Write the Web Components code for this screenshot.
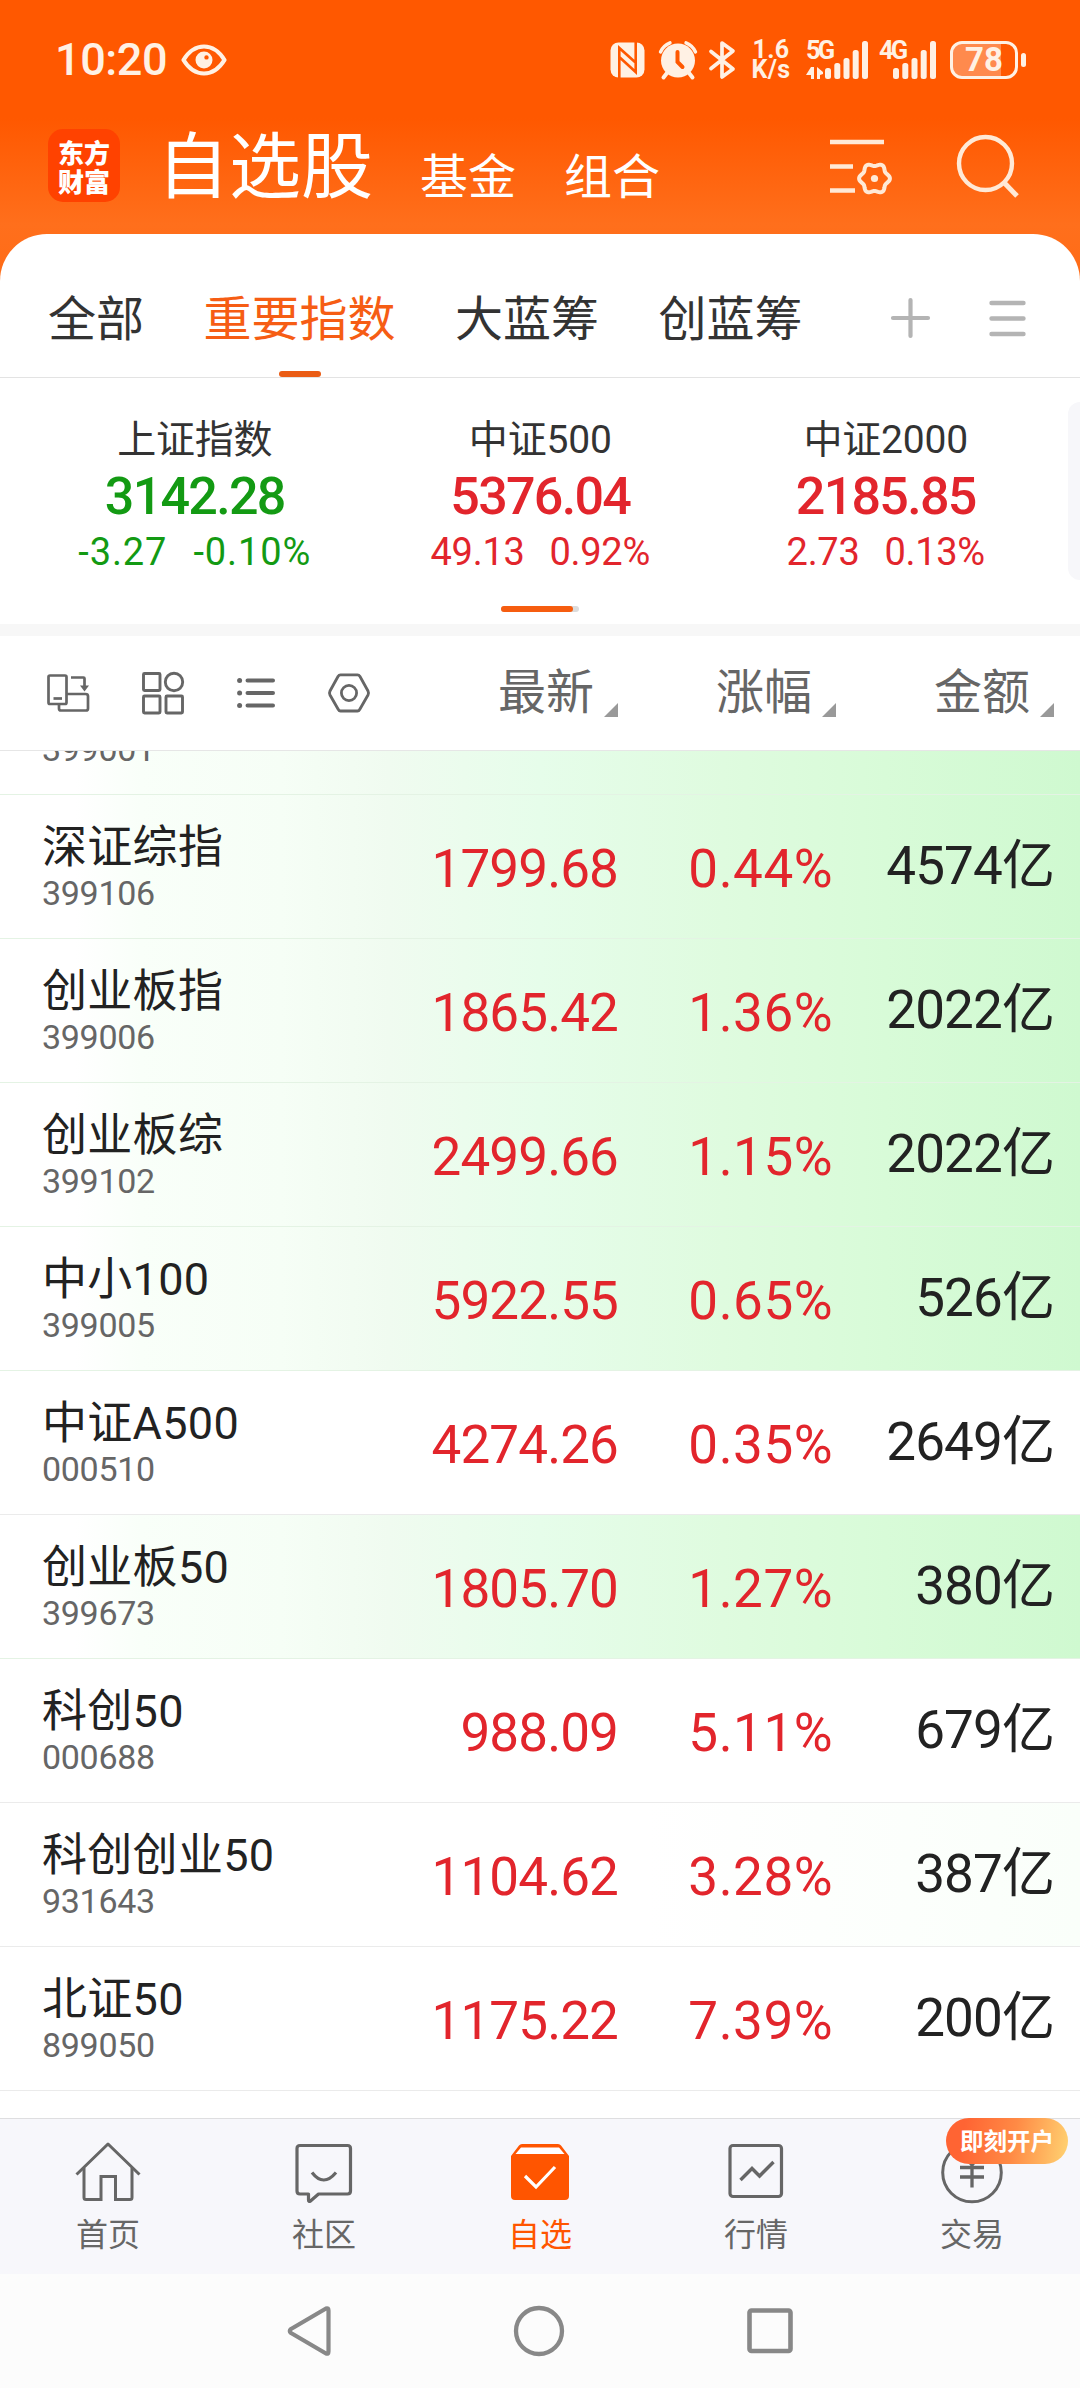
<!DOCTYPE html>
<html lang="zh-CN">
<head>
<meta charset="utf-8">
<meta name="viewport" content="width=device-width, initial-scale=1">
<title>自选股</title>
<style>
  html, body { margin: 0; padding: 0; }
  body {
    width: 1080px; height: 2388px; overflow: hidden;
    font-family: Roboto, "Noto Sans CJK SC", sans-serif;
    color: #222;
    background: #fff;
  }
</style>
</head>
<body>
<stock-app></stock-app>

<script>
const gearPath = (cx, cy, r, a) => {
  const pts = [];
  for (let i = 0; i < 120; i++) {
    const t = i / 120 * Math.PI * 2;
    const rr = r + a * Math.cos(6 * t);
    pts.push((cx + rr * Math.cos(t)).toFixed(2) + ' ' + (cy + rr * Math.sin(t)).toFixed(2));
  }
  return 'M' + pts.join('L') + 'Z';
};

/* name: [width, height, markup] */
const ICONS = {
  eye: [46, 32, `<path d="M2.5 16C8 7 15 2.5 23 2.5S38 7 43.500 16C38 25 31 29.500 23 29.500S8 25 2.500 16Z" fill="none" stroke="currentColor" stroke-width="4.2" stroke-linejoin="round"/><path fill-rule="evenodd" fill="currentColor" d="M23 7.500a8.500 8.500 0 1 0 0 17a8.500 8.500 0 1 0 0-17ZM25.500 11.200a2.200 2.200 0 1 1 0 4.400a2.200 2.200 0 1 1 0-4.400Z"/>`],
  nfc: [35, 36, `<rect x="0.500" y="0.500" width="34" height="35" rx="8" fill="currentColor"/><path d="M9.300 36V6L25.500 20.500M25.700 0V30L9.800 15.500" fill="none" stroke="#ff5800" stroke-width="2.600"/>`],
  alarm: [38, 38, `<circle cx="19" cy="19.500" r="17" fill="currentColor"/><path d="M1.500 11A17 17 0 0 1 11 1.800M36.500 11A17 17 0 0 0 27 1.800" stroke="currentColor" stroke-width="3.400" stroke-linecap="round" fill="none"/><path d="M8 32L4.500 36.500M30 32L33.500 36.500" stroke="currentColor" stroke-width="4" stroke-linecap="round"/><path d="M18.500 11V21L23.500 26" stroke="#ff5800" stroke-width="4" fill="none" stroke-linecap="round"/>`],
  bluetooth: [26, 38, `<path d="M2 10.500L24 28L13 36V2L24 10L2 27.500" stroke="currentColor" stroke-width="3.700" stroke-linejoin="round" stroke-linecap="round" fill="none"/>`],
  bars: [38, 38, `<g fill="currentColor"><rect x="0" y="27" width="6" height="11" rx="2.500"/><rect x="9.300" y="22" width="6" height="16" rx="2.500"/><rect x="18.500" y="17" width="6" height="21" rx="2.500"/><rect x="27.700" y="9" width="6" height="29" rx="2.500"/><rect x="37" y="0" width="6" height="38" rx="2.500"/></g>`],
  transfer: [18, 12, `<path d="M5 0H8V12H5V8H0ZM11 0L17 5V7L14 8V12H11Z" fill="currentColor"/>`],
  filter: [66, 58, `<path d="M1 9H55M1 33.500H24M1 57.500H26" transform="translate(0,-1)" stroke="currentColor" stroke-width="4.600"/><path d="${gearPath(45.5, 44.5, 13.900, 1.500)}" fill="none" stroke="currentColor" stroke-width="4"/><circle cx="45.500" cy="44.500" r="3.600" fill="currentColor"/>`],
  search: [64, 66, `<circle cx="29.500" cy="29.500" r="26.500" fill="none" stroke="currentColor" stroke-width="4.400"/><path d="M48 48.500L61 62" stroke="currentColor" stroke-width="5"/>`],
  plus: [39, 40, `<path d="M2 20H37M19.500 2V38" stroke="currentColor" stroke-width="4.200" stroke-linecap="round"/>`],
  menu: [37, 37, `<path d="M2.500 3H34.500M2.500 18.500H34.500M2.500 34H34.500" stroke="currentColor" stroke-width="4.400" stroke-linecap="round"/>`],
  rotate: [42, 38, `<g fill="none" stroke="currentColor" stroke-width="2.700" stroke-linejoin="round"><rect x="1.500" y="1.500" width="18" height="28.500" rx="1.500"/><path d="M20 20H38.500Q41 20 41 22V34.500Q41 36.500 39 36.500H14Q12 36.500 12 34.500V30.500"/><path d="M6.500 24.500H15"/><path d="M24 3.500H36.500Q37.500 3.500 37.500 4.500V13"/></g><path d="M33 11.500H42L37.500 17.500Z" fill="currentColor"/>`],
  grid: [42, 42, `<g fill="none" stroke="currentColor" stroke-width="2.900"><rect x="1.500" y="1.500" width="16.500" height="17" rx="1"/><circle cx="32" cy="10" r="8.700"/><rect x="1.500" y="24" width="16.500" height="17" rx="1"/><rect x="24" y="24" width="16.500" height="17" rx="1"/></g>`],
  list: [38, 32, `<path d="M10.500 3.500H36M10.500 16H36M10.500 28.500H36" stroke="currentColor" stroke-width="4" stroke-linecap="round"/><g fill="currentColor"><circle cx="2.600" cy="3.500" r="2.500"/><circle cx="2.600" cy="16" r="2.500"/><circle cx="2.600" cy="28.500" r="2.500"/></g>`],
  nut: [42, 40, `<path d="M12.500 1.800H29.500Q31 1.800 32 3.500L40 18Q41 20 40 22L32 36Q31 38 29.500 38H12.500Q11 38 10 36L2 22Q1 20 2 18L10 3.500Q11 1.800 12.500 1.800Z" fill="none" stroke="currentColor" stroke-width="2.800"/><circle cx="21" cy="20" r="7.600" fill="none" stroke="currentColor" stroke-width="2.800"/>`],
  sort: [14, 14, `<path d="M14 0V14H0Z" fill="currentColor"/>`],
  home: [66, 62, `<g fill="none" stroke="currentColor" stroke-width="3"><path d="M1.500 33.500L33 3L64.500 33.500" stroke-linejoin="round"/><path d="M9 27V56.500Q9 58.500 11 58.500H26V35.500H40.500V58.500H55Q57 58.500 57 56.500V27"/></g>`],
  chat: [58, 62, `<path d="M5 4.500H52.500Q55.500 4.500 55.500 7.500V50Q55.500 53 52.500 53H23.500L15.500 60Q13.500 61 13.500 59V53H5Q2 53 2 50V7.500Q2 4.500 5 4.500Z" fill="none" stroke="currentColor" stroke-width="3.200" stroke-linejoin="round"/><path d="M17 31.500Q28.500 46.500 41 31.500" fill="none" stroke="currentColor" stroke-width="3.200"/>`],
  watch: [60, 62, `<path d="M1 15L9 4.500Q10 3 12 3H48Q50 3 51 4.500L59 15V55Q59 59 55 59H5Q1 59 1 55Z" fill="currentColor"/><path d="M5.500 13L11 6.500H49L54.500 13Z" fill="#fff"/><path d="M15 35L26 46L45 26" fill="none" stroke="#fff" stroke-width="3.200"/>`],
  chart: [56, 62, `<rect x="2" y="4.500" width="51.500" height="51" rx="3" fill="none" stroke="currentColor" stroke-width="3.200"/><path d="M12.500 39L24 27.500L31.500 35L45.500 21" fill="none" stroke="currentColor" stroke-width="3.400"/>`],
  trade: [62, 62, `<circle cx="31" cy="31.500" r="29.300" fill="none" stroke="currentColor" stroke-width="3"/><path d="M21 12L31 24L41 12M19 26.500H43M19 36H43M31 24V46.500" fill="none" stroke="currentColor" stroke-width="3.300"/>`],
  back: [44, 52, `<path d="M39 3.500Q41.500 2.500 41.500 5.500V46.500Q41.500 49.500 39 48.500L4 28Q1.500 26 4 24Z" fill="none" stroke="currentColor" stroke-width="4.200" stroke-linejoin="round"/>`],
  circle: [52, 52, `<circle cx="26" cy="26" r="23" fill="none" stroke="currentColor" stroke-width="4.300"/>`],
  square: [46, 46, `<rect x="2.500" y="2.500" width="41" height="40.500" rx="2" fill="none" stroke="currentColor" stroke-width="4.600"/>`]
};

const define = (name, template) => {
  customElements.define(name, class extends HTMLElement {
    constructor() { super(); this.attachShadow({ mode: 'open' }); }
    connectedCallback() {
      this.shadowRoot.innerHTML = typeof template === 'function' ? template(this) : template;
    }
  });
};

define('ui-icon', el => {
  const [w, h, body] = ICONS[el.getAttribute('name')];
  return `<style>:host{display:block;flex:none;width:${w}px;height:${h}px}svg{display:block;overflow:visible}</style>
  <svg width="${w}" height="${h}" viewBox="0 0 ${w} ${h}">${body}</svg>`;
});

define('battery-level', `
<style>
  :host{display:flex;align-items:center;gap:3px;flex:none}
  .body{box-sizing:border-box;width:68px;height:38px;border:3.500px solid #fff1e4;border-radius:12px;padding:0;display:flex;align-items:center;justify-content:center;
    background:linear-gradient(90deg,#ff8a4d 0 78%,transparent 78%);font-size:33px;line-height:30px;font-weight:700;color:#fff1e4}
  .tip{width:5px;height:14px;border-radius:3px;background:#fff1e4}
</style>
<div class="body"><slot></slot></div><div class="tip"></div>`);

define('signal-meter', el => `
<style>
  :host{display:grid;flex:none;width:${el.getAttribute('w')}px;height:38px;grid-template-columns:${el.getAttribute('lead')}px 1fr;font-weight:700;font-size:25.500px;line-height:19px;letter-spacing:-3px}
  ui-icon{grid-row:1;grid-column:2}
  .l{grid-row:1;grid-column:1;display:flex;flex-direction:column;justify-content:space-between;white-space:nowrap}
</style>
<div class="l"><slot></slot>${el.hasAttribute('data') ? '<ui-icon name="transfer"></ui-icon>' : ''}</div>
<ui-icon name="bars"></ui-icon>`);

define('status-bar', `
<style>
  :host{display:flex;align-items:center;height:120px;padding:0 54px 0 55px;box-sizing:border-box;color:#fff1e4}
  .time{font-size:45px;line-height:54px;font-weight:500;letter-spacing:-.4px;width:126px;white-space:nowrap}
  .right{margin-left:auto;display:flex;align-items:center}
  .speed{font-size:25px;line-height:20.500px;font-weight:700;text-align:center;width:40px;margin:0 15px 0 16px;white-space:nowrap;letter-spacing:.4px}
  .speed div{height:20.500px}
</style>
<div class="time">10:20</div><ui-icon name="eye"></ui-icon>
<div class="right">
  <ui-icon name="nfc"></ui-icon>
  <ui-icon name="alarm" style="margin-left:14px"></ui-icon>
  <ui-icon name="bluetooth" style="margin-left:12px"></ui-icon>
  <div class="speed"><div>1.6</div><div>K/s</div></div>
  <signal-meter w="73" lead="19" data>5G</signal-meter>
  <signal-meter w="71" lead="14">4G</signal-meter>
  <battery-level>78</battery-level>
</div>`);

define('brand-logo', `
<style>
  :host{display:grid;box-sizing:border-box;width:72px;height:73px;border-radius:15px;background:#ff4200;color:#fff;align-content:center;justify-content:center;
  font:900 26px/29px "Noto Sans CJK SC",sans-serif;text-align:center;flex:none}
</style>
<div>东方</div><div>财富</div>`);

define('app-header', `
<style>
  :host{display:flex;align-items:flex-start;height:114px;padding:0 60px 0 48px;box-sizing:border-box;color:#fff}
  brand-logo{margin-top:9px}
  h1,span{margin:0;font-weight:400;white-space:nowrap}
  h1{font-size:72px;line-height:96px;margin-left:37px}
  span{font-size:48px;line-height:60px;margin-top:28px}
  .a{margin-left:47px}.b{margin-left:48px}
  .icons{margin-left:auto;display:flex;color:#ffe9d6}
</style>
<brand-logo></brand-logo>
<h1>自选股</h1><span class="a">基金</span><span class="b">组合</span>
<div class="icons"><ui-icon name="filter" style="margin-top:14px"></ui-icon><ui-icon name="search" style="margin:14px 0 0 61px"></ui-icon></div>`);

define('group-tab', `
<style>
  :host{display:flex;flex-direction:column;align-items:center;justify-content:flex-end;height:143px;font-size:48px;line-height:60px;color:#333;white-space:nowrap}
  i{display:block;width:42px;height:6px;border-radius:3px;margin-top:21px}
  :host([active]){color:#f65d14}
  :host([active]) i{background:#ea5c15}
</style><slot></slot><i></i>`);

define('group-tabs', `
<style>
  :host{display:flex;height:144px;box-sizing:border-box;border-bottom:1px solid #e3e3e3;padding:0 54px 0 48px}
  nav{display:flex;gap:59.500px}
  .tools{margin-left:auto;display:flex;align-items:center;gap:59px;color:#b4b4b4;height:168px}
</style>
<nav><group-tab>全部</group-tab><group-tab active>重要指数</group-tab><group-tab>大蓝筹</group-tab><group-tab>创蓝筹</group-tab></nav>
<div class="tools"><ui-icon name="plus"></ui-icon><ui-icon name="menu"></ui-icon></div>`);

define('index-card', el => `
<style>
  :host{display:flex;flex-direction:column;align-items:center;flex:none;width:345.500px;white-space:nowrap;padding-top:38px;box-sizing:border-box}
  .n{font-size:39px;line-height:48px;color:#333;letter-spacing:-.2px}
  .v{font-size:52px;line-height:60px;font-weight:500;margin-top:3px;letter-spacing:-1.700px}
  .d{font-size:38px;line-height:46px;margin-top:2px;display:flex;gap:25px;letter-spacing:-.3px}
  .v,.d{color:#e2252c}
  :host([down]) .v,:host([down]) .d{color:#139a13}
  :host([down]) .d{letter-spacing:.9px;gap:26px}
</style>
<div class="n"><slot></slot></div><div class="v">${el.getAttribute('value')}</div>
<div class="d"><span>${el.getAttribute('change')}</span><span>${el.getAttribute('pct')}</span></div>`);

define('index-strip', `
<style>
  :host{display:flex;flex-direction:column;height:246px;overflow:hidden}
  .cards{display:flex;height:228px;padding-left:22px}
  .next{flex:none;width:60px;height:178px;margin:24px 0 0 9px;border-radius:12px;background:#f7f7fa}
  .pager{align-self:center;width:78px;height:6px;border-radius:3px;background:#dcdcdc}
  .pager i{display:block;width:72px;height:6px;border-radius:3px;background:#f65d10}
</style>
<div class="cards">
  <index-card down value="3142.28" change="-3.27" pct="-0.10%">上证指数</index-card>
  <index-card value="5376.04" change="49.13" pct="0.92%">中证500</index-card>
  <index-card value="2185.85" change="2.73" pct="0.13%">中证2000</index-card>
  <div class="next"></div>
</div>
<div class="pager"><i></i></div>`);

define('sort-label', `
<style>:host{display:flex;align-items:center;justify-content:flex-end;gap:10px;font-size:48px;line-height:60px;color:#666;white-space:nowrap}
ui-icon{color:#999;margin-top:34px}</style><slot></slot><ui-icon name="sort"></ui-icon>`);

define('list-toolbar', `
<style>
  :host{display:grid;grid-template-columns:1fr 240px 218px 218px;align-items:center;height:115px;box-sizing:border-box;border-bottom:1px solid #e6e6e6;padding:0 26px 0 47px;background:#fff}
  .view{display:flex;align-items:center;gap:53px;color:#666}
</style>
<div class="view"><ui-icon name="rotate"></ui-icon><ui-icon name="grid"></ui-icon><ui-icon name="list"></ui-icon><ui-icon name="nut"></ui-icon></div>
<sort-label>最新</sort-label><sort-label>涨幅</sort-label><sort-label>金额</sort-label>`);

define('stock-row', el => `
<style>
  :host{display:grid;grid-template-columns:1fr 240px 218px 218px;height:144px;box-sizing:border-box;border-bottom:1px solid #ebebeb;padding:0 26px 0 42px;white-space:nowrap;background:#fff}
  :host([glow]){background:linear-gradient(90deg,#fff 0,#fff 7%,#f9fff9 13%,#f6fef6 26%,#f0fbf0 36%,#e6fdea 50%,#dffbdf 67%,#d8fbd8 82%,#cff9d0 100%);border-bottom-color:#e4f3e4}
  :host([faint]){background:linear-gradient(90deg,#fff 60%,#fafffa)}
  .n{font-size:45px;line-height:54px;margin-top:26px;color:#222;letter-spacing:.3px}
  .c{font-size:34px;line-height:40px;margin-top:-2px;color:#666;letter-spacing:-.3px}
  .p,.a{text-align:right;font-size:53px;line-height:60px}
  .p{margin-top:44px;color:#e2252c;letter-spacing:-.9px}
  .pc{padding-right:3px;letter-spacing:.5px}
  .a{margin-top:41px;color:#222;letter-spacing:-.9px}
</style>
<div><div class="n"><slot></slot></div><div class="c">${el.getAttribute('code')}</div></div>
<div class="p">${el.getAttribute('price')}</div><div class="p pc">${el.getAttribute('pct')}</div><div class="a">${el.getAttribute('amount')}</div>`);

const STOCKS = [
  ['', '399001', '', '', '', 'glow'],
  ['深证综指', '399106', '1799.68', '0.44%', '4574亿', 'glow'],
  ['创业板指', '399006', '1865.42', '1.36%', '2022亿', 'glow'],
  ['创业板综', '399102', '2499.66', '1.15%', '2022亿', 'glow'],
  ['中小100', '399005', '5922.55', '0.65%', '526亿', 'glow'],
  ['中证A500', '000510', '4274.26', '0.35%', '2649亿', ''],
  ['创业板50', '399673', '1805.70', '1.27%', '380亿', 'glow'],
  ['科创50', '000688', '988.09', '5.11%', '679亿', ''],
  ['科创创业50', '931643', '1104.62', '3.28%', '387亿', 'faint'],
  ['北证50', '899050', '1175.22', '7.39%', '200亿', '']
];

/* The list is scrolled by 100px, so the first row shows only its lower edge. */
define('stock-list', `
<style>:host{display:block;height:1367px;overflow:hidden}.rows{margin-top:-100px}</style>
<div class="rows">${STOCKS.map(([n, c, p, d, a, f]) =>
  `<stock-row ${f} code="${c}" price="${p}" pct="${d}" amount="${a}">${n || '&nbsp;'}</stock-row>`).join('')}</div>`);

define('tab-item', el => `
<style>
  :host{position:relative;display:flex;flex-direction:column;align-items:center;flex:1;padding-top:22px;color:#666;font-size:32px;line-height:40px}
  :host([active]){color:#ff5500}
  div{margin-top:12px;white-space:nowrap}
  b{position:absolute;left:82px;top:-1px;width:122px;height:46px;border-radius:23px;background:linear-gradient(100deg,#ff6433 15%,#ff8a45 55%,#ffd070 98%);
    color:#fff;font-size:23.500px;line-height:48px;text-align:center;font-weight:700}
</style>
<ui-icon name="${el.getAttribute('icon')}"></ui-icon><div><slot></slot></div>${el.hasAttribute('badge') ? `<b>${el.getAttribute('badge')}</b>` : ''}`);

define('bottom-tabs', `
<style>:host{display:flex;height:156px;box-sizing:border-box;border-top:1px solid #dedee0;background:#f7f7fb}</style>
<tab-item icon="home">首页</tab-item><tab-item icon="chat">社区</tab-item><tab-item icon="watch" active>自选</tab-item><tab-item icon="chart">行情</tab-item><tab-item icon="trade" badge="即刻开户">交易</tab-item>`);

define('system-nav', `
<style>:host{display:flex;justify-content:center;align-items:center;height:114px;gap:182px;background:#fcfcfc;color:#888}</style>
<ui-icon name="back"></ui-icon><ui-icon name="circle"></ui-icon><ui-icon name="square"></ui-icon>`);

define('stock-app', `
<style>
  :host{display:block;width:1080px;height:2388px;background:linear-gradient(180deg,#ff5800 0,#ff5800 118px,#ff6f1c 225px,#ff6a14 300px)}
  main{border-radius:47px 47px 0 0;background:#fff;overflow:hidden}
  .band{height:12px;background:#f7f7f7}
</style>
<status-bar></status-bar>
<app-header></app-header>
<main>
  <group-tabs></group-tabs>
  <index-strip></index-strip>
  <div class="band"></div>
  <list-toolbar></list-toolbar>
  <stock-list></stock-list>
  <bottom-tabs></bottom-tabs>
  <system-nav></system-nav>
</main>`);
</script>
</body>
</html>
